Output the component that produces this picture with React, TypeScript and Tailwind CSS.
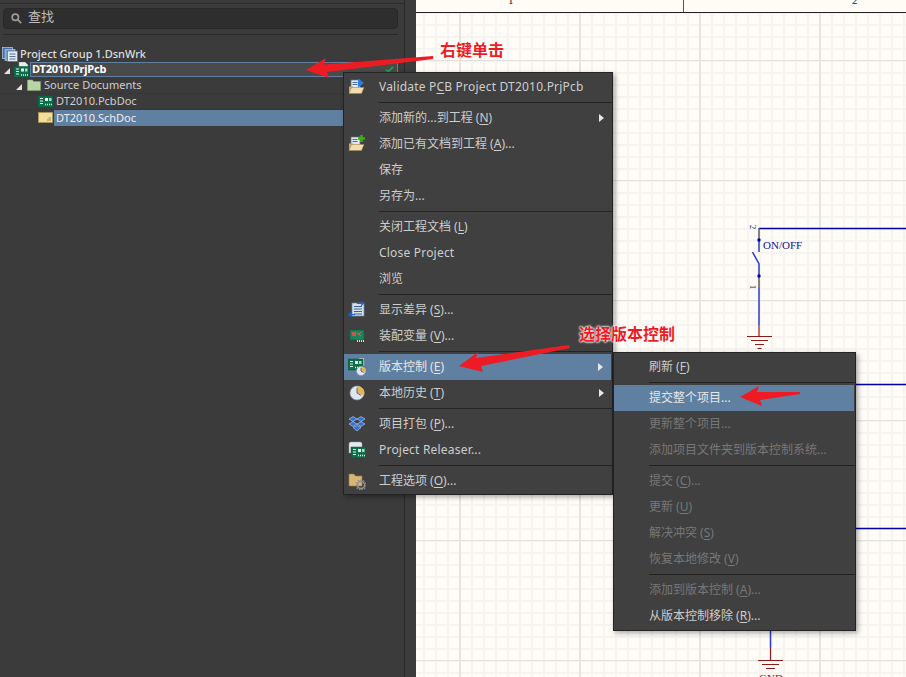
import type { ReactNode } from "react";

const FONT = "[font-family:'Noto_Sans','Noto_Sans_CJK_SC',sans-serif]";

function Pcb({ x = 0, y = 0 }: { x?: number; y?: number }) {
  return (
    <g transform={`translate(${x} ${y})`}>
      <rect x="0" y="0" width="15" height="11" fill="#0f6e4a" stroke="#0b4f36" strokeWidth="0.5" />
      <path d="M2 2.5h3M2 5h3M2 7.5h3" stroke="#e8f4ee" strokeWidth="1.2" />
      <rect x="7" y="2" width="3" height="3" fill="#e8f4ee" />
      <rect x="11" y="2" width="2.5" height="3" fill="#a9d8c2" />
      <path d="M7 8.5h7" stroke="#e8f4ee" strokeWidth="1.4" strokeDasharray="1 1" />
    </g>
  );
}

function OpenFolder() {
  return (
    <>
      <rect x="3" y="2" width="9" height="9" fill="#dfe8f2" stroke="#5a6f8a" strokeWidth="0.7" />
      <path d="M4.5 4.5h5M4.5 6.5h5" stroke="#39618f" strokeWidth="0.9" />
      <path d="M1 8.5h4l1 1h7v5H1z" fill="#c9a667" />
      <path d="M1 15.5l2.5-6H16l-2.5 6z" fill="#f3dcae" stroke="#a5834a" strokeWidth="0.5" />
    </>
  );
}

function Clock({ x, y, r }: { x: number; y: number; r: number }) {
  return (
    <g>
      <circle cx={x} cy={y} r={r} fill="#dfe7f3" stroke="#8c97a8" strokeWidth="0.6" />
      <path d={`M${x} ${y}V${y - r}A${r} ${r} 0 0 1 ${x + r} ${y + r * 0.35}z`} fill="#e2b75a" />
      <path d={`M${x} ${y - r * 0.7}V${y}L${x + r * 0.6} ${y + r * 0.35}`} stroke="#3f4a5c" strokeWidth="0.8" fill="none" />
    </g>
  );
}

const ICONS: Record<string, ReactNode> = {
  validate: (
    <>
      <OpenFolder />
      <path d="M10 0.5v9l6-4.5z" fill="#2f7be8" />
    </>
  ),
  add: (
    <>
      <OpenFolder />
      <path d="M10 3.5h7M13.5 0v7" stroke="#3fae12" strokeWidth="2.4" />
    </>
  ),
  diff: (
    <>
      <rect x="4" y="2" width="12" height="13" fill="#d5e0ee" stroke="#6d86a5" strokeWidth="0.7" />
      <path d="M6 5.5h8M6 8h8M6 10.5h8M6 13h8" stroke="#3d628c" strokeWidth="1" />
      <path d="M9 2.5h6M13 0.5l2.5 2-2.5 2" stroke="#1f5fd6" strokeWidth="1.2" fill="none" />
      <path d="M1 13.5h6M3.5 11.5l-2.5 2 2.5 2" stroke="#1f5fd6" strokeWidth="1.2" fill="none" />
    </>
  ),
  variant: (
    <>
      <rect x="2" y="3" width="14" height="10" fill="#19835a" stroke="#0d5a3d" strokeWidth="0.5" />
      <rect x="4" y="5" width="4" height="4" fill="#c9574b" />
      <path d="M9 6l4 3M13 5l-3 3" stroke="#cf6a5e" strokeWidth="1" />
      <path d="M9 14h7" stroke="#cfe8da" strokeWidth="2" strokeDasharray="1 1" />
    </>
  ),
  vcs: (
    <>
      <rect x="11" y="0" width="5" height="8" fill="#e3e8ee" stroke="#8a97a8" strokeWidth="0.5" />
      <Pcb x={0} y={1} />
      <Clock x={13} y={13} r={4.5} />
    </>
  ),
  history: <Clock x={9} y={9} r={7} />,
  dropbox: (
    <g fill="#2f73dc" stroke="#dbe7fa" strokeWidth="0.5">
      <path d="M5 1.5l4 2.5-4 2.5L1 4z" />
      <path d="M13 1.5l4 2.5-4 2.5L9 4z" />
      <path d="M5 6.5l4 2.5-4 2.5L1 9z" />
      <path d="M13 6.5l4 2.5-4 2.5L9 9z" />
      <path d="M5 12.5l4-2 4 2-4 3.5z" />
    </g>
  ),
  releaser: (
    <>
      <path d="M1 3q0-2 2-2h9q2 0 2 2v9H1z" fill="#e6eaef" stroke="#9aa3ae" strokeWidth="0.5" />
      <Pcb x={3} y={6} />
    </>
  ),
  options: (
    <>
      <path d="M1 2h5l1.5 2H14v10H1z" fill="#d9b671" stroke="#94763f" strokeWidth="0.6" />
      <circle cx="13" cy="13" r="3.6" fill="none" stroke="#8d8f92" strokeWidth="1.6" />
      <circle cx="13" cy="13" r="5" fill="none" stroke="#8d8f92" strokeWidth="1.2" strokeDasharray="1.4 1.4" />
    </>
  ),
};

type Item =
  | { sep: true }
  | {
      sep?: false;
      text: string;
      key?: string;
      tail?: string;
      icon?: string;
      arrow?: boolean;
      active?: boolean;
      disabled?: boolean;
      bright?: boolean;
      latin?: boolean;
    };

const mainItems: Item[] = [
  { text: "Validate P", key: "C", tail: "B Project DT2010.PrjPcb", icon: "validate", latin: true },
  { sep: true },
  { text: "添加新的...到工程 (", key: "N", tail: ")", arrow: true },
  { text: "添加已有文档到工程 (", key: "A", tail: ")...", icon: "add" },
  { text: "保存" },
  { text: "另存为..." },
  { sep: true },
  { text: "关闭工程文档 (", key: "L", tail: ")" },
  { text: "Close Project", latin: true },
  { text: "浏览" },
  { sep: true },
  { text: "显示差异 (", key: "S", tail: ")...", icon: "diff" },
  { text: "装配变量 (", key: "V", tail: ")...", icon: "variant" },
  { sep: true },
  { text: "版本控制 (", key: "E", tail: ")", icon: "vcs", arrow: true, active: true },
  { text: "本地历史 (", key: "T", tail: ")", icon: "history", arrow: true },
  { sep: true },
  { text: "项目打包 (", key: "P", tail: ")...", icon: "dropbox" },
  { text: "Project Releaser...", icon: "releaser", latin: true },
  { sep: true },
  { text: "工程选项 (", key: "O", tail: ")...", icon: "options" },
];

const subItems: Item[] = [
  { text: "刷新 (", key: "F", tail: ")" },
  { sep: true },
  { text: "提交整个项目...", active: true, bright: true },
  { text: "更新整个项目...", disabled: true },
  { text: "添加项目文件夹到版本控制系统...", disabled: true },
  { sep: true },
  { text: "提交 (", key: "C", tail: ")...", disabled: true },
  { text: "更新 (", key: "U", tail: ")", disabled: true },
  { text: "解决冲突 (", key: "S", tail: ")", disabled: true },
  { text: "恢复本地修改 (", key: "V", tail: ")", disabled: true },
  { sep: true },
  { text: "添加到版本控制 (", key: "A", tail: ")...", disabled: true },
  { text: "从版本控制移除 (", key: "R", tail: ")..." },
];

function MenuRows({ items }: { items: Item[] }) {
  return (
    <>
      {items.map((item, i) =>
        item.sep ? (
          <div key={i} className="h-[5px] pl-[35px] flex items-center">
            <div className="h-px w-full bg-[#232323]" />
          </div>
        ) : (
          <div
            key={i}
            className={`h-[26px] flex items-center relative pl-[35px] ${item.active ? "bg-[#5f80a1] mr-px" : ""} ${
              item.disabled ? "text-[#777777]" : item.bright || item.active ? "text-[#e6e6e6]" : "text-[#cdcdcd]"
            }`}
          >
            {item.icon && (
              <svg viewBox="0 0 18 18" className="absolute left-[4px] top-[4px] w-[18px] h-[18px]">
                {ICONS[item.icon]}
              </svg>
            )}
            <span className={`whitespace-pre ${item.latin ? "tracking-[0.2px]" : ""}`}>
              {item.text}
              {item.key && <u className="underline-offset-2">{item.key}</u>}
              {item.tail}
            </span>
            {item.arrow && <span className="absolute right-[8px] top-[9px] w-0 h-0 border-y-[4px] border-y-transparent border-l-[5px] border-l-[#e8e8e8]" />}
          </div>
        ),
      )}
    </>
  );
}

function TreeRow({ children, className = "" }: { children: ReactNode; className?: string }) {
  return <div className={`h-4 flex items-center relative border-b border-[#363636] ${className}`}>{children}</div>;
}

export default function App() {
  return (
    <div className={`relative w-[906px] h-[677px] overflow-hidden flex bg-[#3b3b3b] text-[12px] ${FONT}`}>
      {/* project panel */}
      <aside className="w-[404px] shrink-0 border-t border-[#2d2d2d] mt-[3px] px-[3px] pt-[4px] bg-[#3b3b3b]">
        <div className="h-[21px] rounded-[4px] bg-[#2e2e2e] border border-[#292929] flex items-center pl-[7px] pb-[3px] gap-[6px] text-[13px] text-[#bdbdbd] w-[395px]">
          <svg viewBox="0 0 14 14" className="w-[11px] h-[11px] mt-[3px]" fill="none" stroke="#9a9a9a" strokeWidth="2.2">
            <circle cx="5.5" cy="5.5" r="4" />
            <path d="M8.5 8.5L13 13" />
          </svg>
          <span>查找</span>
        </div>
        <div className="h-px w-[395px] bg-[#2a2a2a] mt-[5px]" />
        <div className="-mx-[3px] mt-[11px] text-[11px] text-[#dedede]">
          <TreeRow className="border-b-0">
            <svg viewBox="0 0 16 15" className="absolute left-[2px] top-[1px] w-[16px] h-[15px]">
              <rect x="0.5" y="0.5" width="10" height="11" fill="#3f6da8" stroke="#a9c3e0" strokeWidth="0.8" />
              <rect x="3" y="2.5" width="10" height="11" fill="#7d9cc4" stroke="#c6d6e8" strokeWidth="0.6" />
              <rect x="5.5" y="4" width="10" height="10.5" fill="#e3eaf3" stroke="#4f6f9b" strokeWidth="0.7" />
              <path d="M7.5 7h6M7.5 9.5h6M7.5 12h6" stroke="#4a6488" strokeWidth="0.9" />
            </svg>
            <span className="ml-[20px] font-medium">Project Group 1.DsnWrk</span>
          </TreeRow>
          <div className="h-4 relative flex items-center">
            <span className="absolute left-[4px] top-[6px] w-0 h-0 border-l-[6px] border-l-transparent border-b-[6px] border-b-[#e2e2e2]" />
            <svg viewBox="0 0 16 15" className="absolute left-[14px] top-0 w-[16px] h-[15px]">
              <path d="M5 0h6l3 3v8H5z" fill="#e8ecf2" stroke="#9aa6b5" strokeWidth="0.5" />
              <Pcb x={0} y={4.5} />
            </svg>
            <div className="absolute left-[30px] w-[368px] top-0 h-[15px] bg-[#4a4a4a] border border-[#5f80a1] flex items-center pl-[1px] font-bold tracking-[-0.2px] text-white">
              DT2010.PrjPcb
              <svg viewBox="0 0 10 8" className="absolute right-[3px] top-[3px] w-[9px] h-[7px]" fill="none" stroke="#1fa34a" strokeWidth="2">
                <path d="M1 4l2.5 2.5L9 1" />
              </svg>
            </div>
          </div>
          <TreeRow>
            <span className="absolute left-[16px] top-[6px] w-0 h-0 border-l-[6px] border-l-transparent border-b-[6px] border-b-[#e2e2e2]" />
            <svg viewBox="0 0 14 12" className="absolute left-[27px] top-[1px] w-[14px] h-[12px]">
              <path d="M0.5 1h5l1 1.5h7V11.5H0.5z" fill="#b7d6a4" stroke="#8aa87a" strokeWidth="0.5" />
            </svg>
            <span className="ml-[44px] text-[#cfcfcf]">Source Documents</span>
          </TreeRow>
          <TreeRow>
            <svg viewBox="0 0 15 11" className="absolute left-[38px] top-[2px] w-[15px] h-[11px]">
              <Pcb />
            </svg>
            <span className="ml-[56px] text-[#cfcfcf]">DT2010.PcbDoc</span>
          </TreeRow>
          <TreeRow className="border-b-0">
            <svg viewBox="0 0 15 11" className="absolute left-[38px] top-[2px] w-[15px] h-[11px]">
              <rect x="0.5" y="0.5" width="14" height="10" fill="#f2de9a" stroke="#b89c4e" strokeWidth="0.6" />
              <path d="M9 8h4M10.5 6h2.5" stroke="#8a7434" strokeWidth="0.8" />
            </svg>
            <div className="absolute left-[54px] right-[6px] top-0 h-4 bg-[#5f80a1] pl-[2px] flex items-center text-[#eeeeee]">DT2010.SchDoc</div>
          </TreeRow>
        </div>
      </aside>
      <div className="w-[12px] shrink-0 border-l border-[#2a2a2a] bg-[#3c3c3c]" />

      {/* schematic sheet */}
      <main className="relative flex-1 flex flex-col bg-[#fffcf8] [font-family:'Liberation_Serif',serif]">
        <div className="relative h-[13px] shrink-0 border-b border-[#222222] overflow-hidden text-[11px] text-[#222222]">
          <span className="absolute left-[92px] -top-[8px]">1</span>
          <span className="absolute left-[267px] top-0 bottom-0 w-px bg-[#555555]" />
          <span className="absolute left-[436px] -top-[8px]">2</span>
        </div>
        <div className="flex-1 bg-[linear-gradient(to_right,#e5e4e0_2px,transparent_2px),linear-gradient(to_bottom,#e2e1dd_1px,transparent_1px),linear-gradient(to_right,#f5f4f0_2px,transparent_2px),linear-gradient(to_bottom,#f5f4f0_2px,transparent_2px)] [background-size:120px_120px,120px_120px,12px_12px,12px_12px] [background-position:43px_0,0_47px,7px_0,0_11px]" />
        <span className="absolute left-[347px] top-[238px] text-[11px] leading-[14px] text-[#101090]">ON/OFF</span>
        <span className="absolute left-[335px] top-[222px] text-[9px] leading-[10px] rotate-90 text-[#333333]">2</span>
        <span className="absolute left-[335px] top-[282px] text-[9px] leading-[10px] rotate-90 text-[#333333]">1</span>
        <span className="absolute left-[343px] top-[672px] text-[11px] leading-[12px] text-[#8a1c1c]">GND</span>
      </main>

      {/* schematic wires */}
      <svg viewBox="0 0 906 677" className="absolute inset-0 w-[906px] h-[677px] pointer-events-none" fill="none">
        <path d="M759 228.5H906M856 384.5H906M856 528.5H906" stroke="#0000a8" strokeWidth="1.5" />
        <path d="M759 228V240M759 276V288" stroke="#444444" strokeWidth="1.3" />
        <path d="M759 240V252M752.5 252L759 264V276M759 288V325M770.5 631V648" stroke="#2a3cc4" strokeWidth="1.5" />
        <circle cx="759" cy="240" r="1.7" fill="#0000a8" />
        <circle cx="759" cy="276" r="1.7" fill="#0000a8" />
        <path d="M759 325V336M747 336.5H772M751 340.5H768M755 344.5H764M757.5 348.5H761.5M770.5 648V660M758 660.5H783M762 664.5H779M766 668.5H775" stroke="#8a1c1c" strokeWidth="1.2" />
      </svg>

      {/* first arrow sits under the menu */}
      <svg viewBox="0 0 906 677" className="absolute inset-0 w-[906px] h-[677px] pointer-events-none">
        <path d="M306 70L326 58L324 64.5L433 56L433 59L327 72L329 78z" fill="#ed1c24" />
      </svg>

      {/* context menus */}
      <div className="absolute left-[343px] top-[72px] w-[270px] h-[423px] bg-[#404040] border border-[#232323] py-px shadow-[2px_2px_5px_rgba(0,0,0,0.35)]">
        <MenuRows items={mainItems} />
      </div>
      <div className="absolute left-[613px] top-[352px] w-[243px] h-[279px] bg-[#404040] border border-[#232323] py-px shadow-[2px_2px_5px_rgba(0,0,0,0.35)]">
        <MenuRows items={subItems} />
      </div>

      {/* annotations */}
      <svg viewBox="0 0 906 677" className="absolute inset-0 w-[906px] h-[677px] pointer-events-none">
        <path d="M459 366L478 352L476 358L569 345L570 348L481 366L483 372z" fill="#ed1c24" />
        <path d="M740 397L759 386L757 392L800 392L800 394L760 400L762 406z" fill="#ed1c24" />
      </svg>
      <span className="absolute left-[440px] top-[40px] text-[16px] leading-[20px] font-bold text-[#ed1c24] [text-shadow:0_0_2px_#fff,0_0_2px_#fff,0_0_3px_#fff]">
        右键单击
      </span>
      <span className="absolute left-[579px] top-[324px] text-[16px] leading-[20px] font-bold text-[#ed1c24] [text-shadow:0_0_2px_#fff,0_0_2px_#fff,0_0_3px_#fff]">
        选择版本控制
      </span>
    </div>
  );
}
